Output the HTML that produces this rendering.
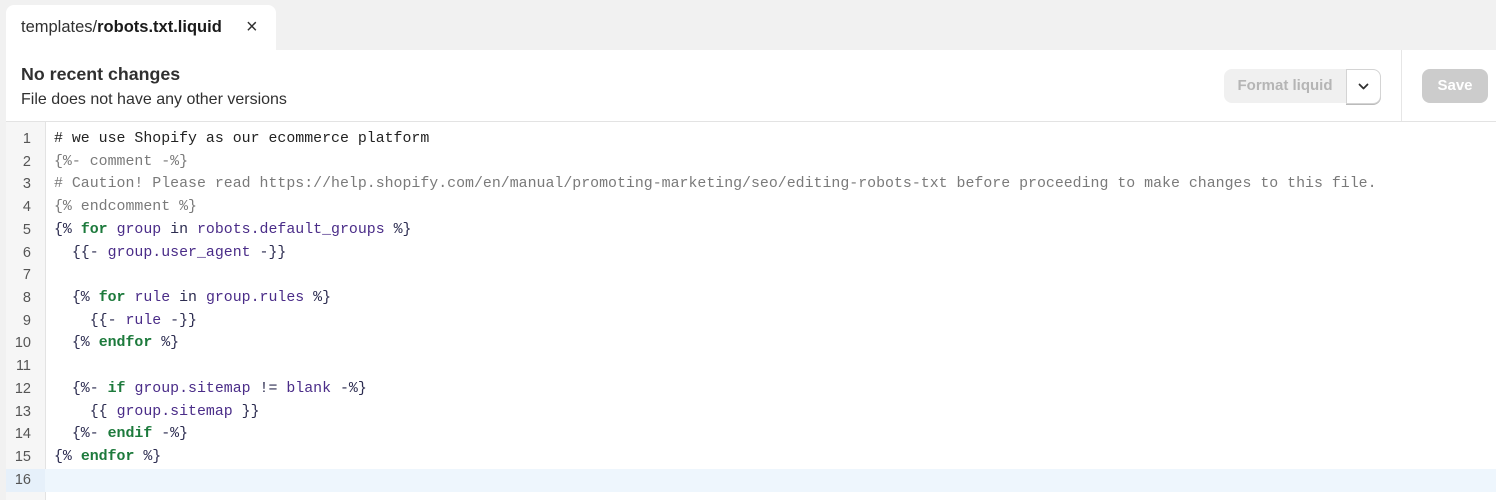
<!DOCTYPE html>
<html><head><style>
body{margin:0;width:1496px;height:500px;background:#f1f1f1;font-family:"Liberation Sans",sans-serif;overflow:hidden;position:relative}
.tab{position:absolute;left:6px;top:5px;width:270px;height:46px;background:#fff;border-radius:8px 8px 0 0;}
.tab span{position:absolute;left:15px;top:13px;font-size:16.5px;color:#303030}
.tab b{font-weight:600;color:#1a1a1a}
.tab .x{position:absolute;left:240px;top:11px;font-size:20px;color:#303030}
.hdr{position:absolute;left:6px;top:50px;width:1490px;height:71px;background:#fff;border-bottom:1px solid #e3e3e3}
.h1{position:absolute;left:15px;top:14px;font-size:17.8px;font-weight:600;color:#303030}
.h2{position:absolute;left:15px;top:41px;font-size:16px;color:#303030}
.fmt{position:absolute;left:1218px;top:19px;width:122px;height:34px;background:#f0f0f0;border-radius:8px 0 0 8px;color:#b5b5b5;font-weight:600;font-size:15px;line-height:34px;text-align:center}
.dd{position:absolute;left:1340px;top:19px;width:33px;height:33px;background:#fff;border:1px solid #d4d4d4;border-radius:0 8px 8px 0;box-shadow:0 1px 0 #bbb}
.div{position:absolute;left:1395px;top:0;width:1px;height:71px;background:#e6e6e6}
.save{position:absolute;left:1416px;top:19px;width:66px;height:34px;background:#cccccc;border-radius:8px;color:#fff;font-weight:700;font-size:15px;line-height:34px;text-align:center}
.ed{position:absolute;left:6px;top:122px;width:1490px;height:378px;background:#fff}
.gut{position:absolute;left:0;top:0;width:39px;height:378px;background:#f6f6f6;border-right:1px solid #e3e3e3}
.code{position:absolute;left:0;top:6px;width:1490px;font-family:"Liberation Mono",monospace;font-size:14.9px}
.l{height:22.73px;line-height:22.73px;position:relative;white-space:pre;color:#2c2c50}
.n{position:absolute;left:0;width:25px;text-align:right;color:#555;font-family:"Liberation Sans",sans-serif;font-size:14.5px}
.t{position:absolute;left:48px}
.c{color:#7a7a7a}.k{color:#1d7a3c;font-weight:700}.v{color:#4a2c88}.p{color:#222}
.hl{background:#eef6fd}
</style></head><body>
<div class="tab"><span>templates/<b>robots.txt.liquid</b></span><span class="x">×</span></div>
<div class="hdr">
<div class="h1">No recent changes</div>
<div class="h2">File does not have any other versions</div>
<div class="fmt">Format liquid</div>
<div class="dd"><svg width="33" height="33" viewBox="0 0 33 33"><path d="M12.5 14.5l4 4 4-4" fill="none" stroke="#303030" stroke-width="1.8" stroke-linecap="round" stroke-linejoin="round"/></svg></div>
<div class="div"></div>
<div class="save">Save</div>
</div>
<div class="ed">
<div class="gut"></div>
<div class="code">
<div class="l"><span class="n">1</span><span class="t p"># we use Shopify as our ecommerce platform</span></div>
<div class="l"><span class="n">2</span><span class="t c">{%- comment -%}</span></div>
<div class="l"><span class="n">3</span><span class="t c"># Caution! Please read https://help.shopify.com/en/manual/promoting-marketing/seo/editing-robots-txt before proceeding to make changes to this file.</span></div>
<div class="l"><span class="n">4</span><span class="t c">{% endcomment %}</span></div>
<div class="l"><span class="n">5</span><span class="t">{% <span class="k">for</span> <span class="v">group</span> in <span class="v">robots.default_groups</span> %}</span></div>
<div class="l"><span class="n">6</span><span class="t">  {{- <span class="v">group.user_agent</span> -}}</span></div>
<div class="l"><span class="n">7</span><span class="t"></span></div>
<div class="l"><span class="n">8</span><span class="t">  {% <span class="k">for</span> <span class="v">rule</span> in <span class="v">group.rules</span> %}</span></div>
<div class="l"><span class="n">9</span><span class="t">    {{- <span class="v">rule</span> -}}</span></div>
<div class="l"><span class="n">10</span><span class="t">  {% <span class="k">endfor</span> %}</span></div>
<div class="l"><span class="n">11</span><span class="t"></span></div>
<div class="l"><span class="n">12</span><span class="t">  {%- <span class="k">if</span> <span class="v">group.sitemap</span> != <span class="v">blank</span> -%}</span></div>
<div class="l"><span class="n">13</span><span class="t">    {{ <span class="v">group.sitemap</span> }}</span></div>
<div class="l"><span class="n">14</span><span class="t">  {%- <span class="k">endif</span> -%}</span></div>
<div class="l"><span class="n">15</span><span class="t">{% <span class="k">endfor</span> %}</span></div>
<div class="l hl"><span style="position:absolute;left:0;top:0;width:39px;height:22.73px;background:#e6f0fa"></span><span class="n">16</span><span class="t"></span></div>
</div>
</div>
</body></html>
